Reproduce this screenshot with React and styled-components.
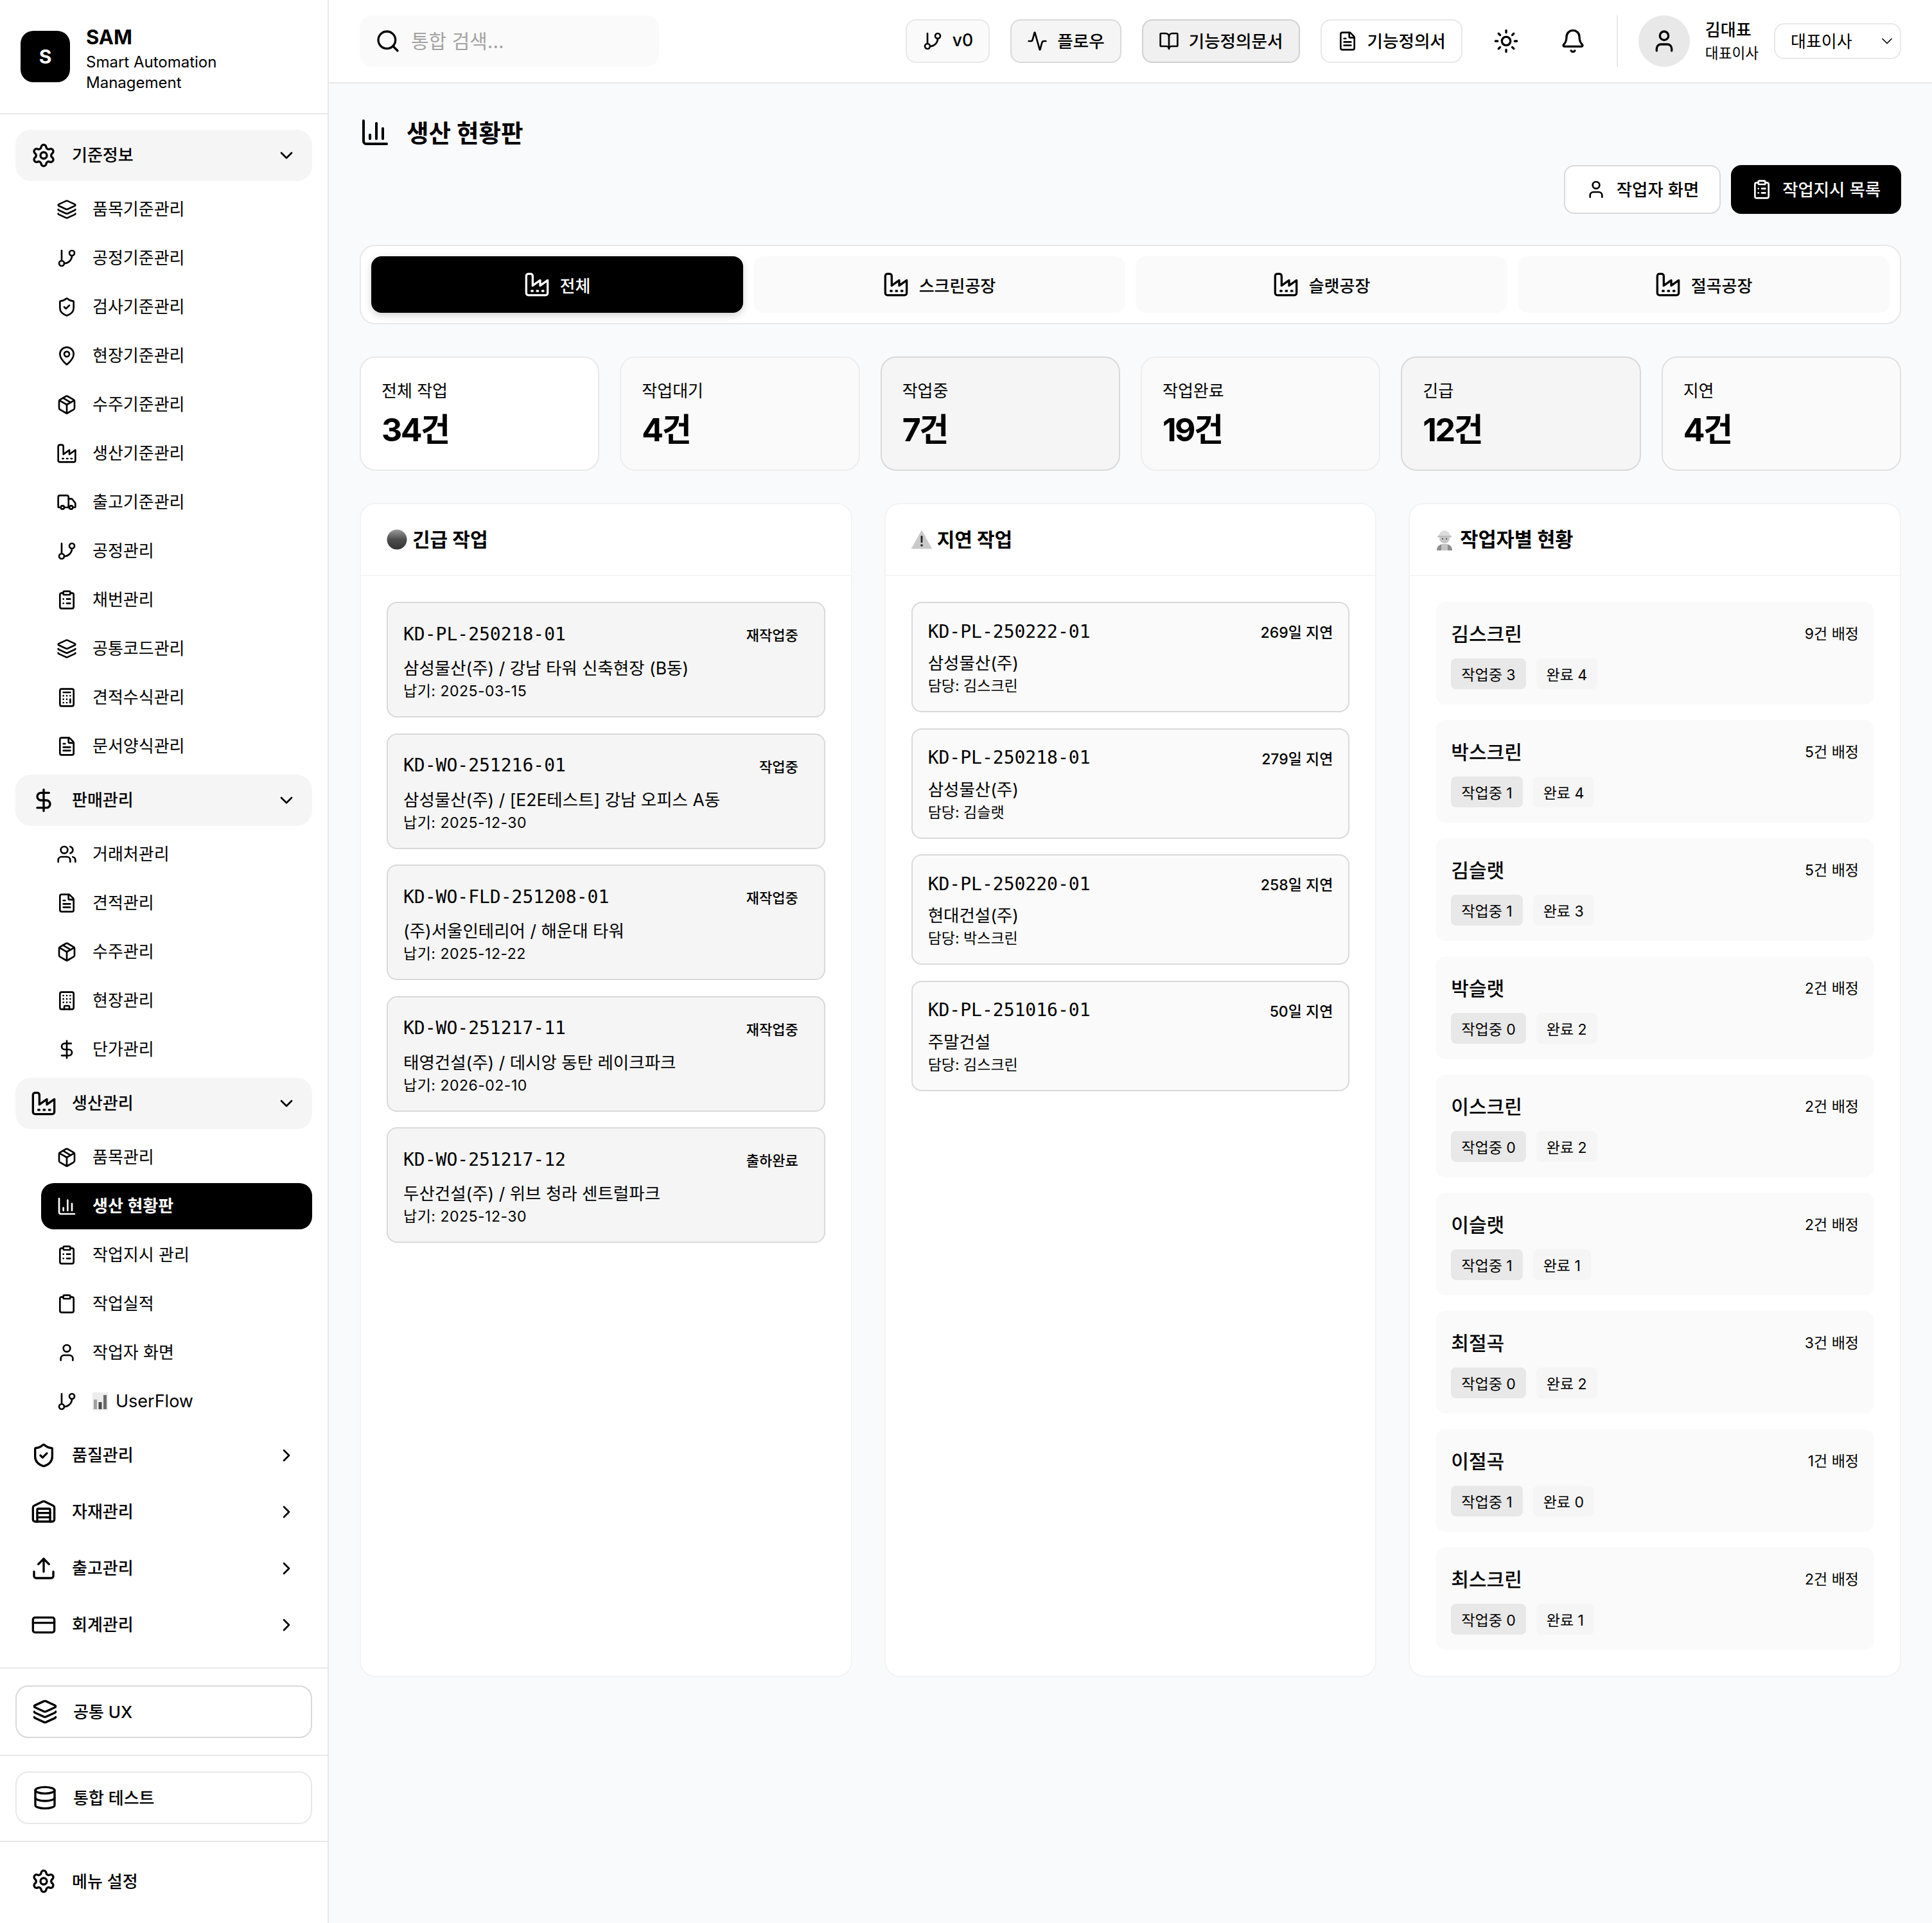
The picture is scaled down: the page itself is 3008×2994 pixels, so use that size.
import React from "react";
import styled, { createGlobalStyle } from "styled-components";
import {
  Activity, Bell, BookOpen, Building, Calculator, ChartColumn, ChevronDown, ChevronRight,
  Clipboard, ClipboardList, CreditCard, Database, DollarSign, FileText, GitBranch,
  Layers, MapPin, Package, Search, Settings, ShieldCheck, Sun, Truck, Upload, User, Users, Warehouse,
} from "lucide-react";

const GlobalStyle = createGlobalStyle`
  * { box-sizing: border-box; }
  body {
    margin: 0;
    background: #f9fafb;
    color: #000;
    font-family: Inter, "Noto Sans CJK KR", sans-serif;
  }
`;

const Layout = styled.div`
  display: flex;
  min-height: 2994px;
`;

/* hangul sits a little low in the flex rows, this lifts the text next to an icon */
const Label = styled.span`
  margin-bottom: ${(p) => p.$lift || 4}px;
`;

/* sidebar */
const Sidebar = styled.aside`
  width: 512px;
  flex-shrink: 0;
  display: flex;
  flex-direction: column;
  background: #fff;
  border-right: 2px solid #e8e8e8;
`;

const Brand = styled.div`
  height: 178px;
  display: flex;
  align-items: center;
  gap: 25px;
  padding: 0 32px;
  border-bottom: 2px solid #e8e8e8;
`;

const LogoBox = styled.div`
  width: 77px;
  height: 80px;
  display: flex;
  align-items: center;
  justify-content: center;
  background: #000;
  color: #fff;
  border-radius: 20px;
  font-size: 30px;
  font-weight: 700;
`;

const BrandText = styled.div`
  margin-top: 4px;
`;

const BrandName = styled.div`
  font-size: 31px;
  font-weight: 700;
  line-height: 46px;
`;

const BrandSub = styled.div`
  font-size: 24px;
  line-height: 32px;
`;

const Menu = styled.nav`
  flex: 1;
  display: flex;
  flex-direction: column;
  gap: 8px;
  padding: 24px;
`;

const GroupHead = styled.div`
  height: 80px;
  display: flex;
  align-items: center;
  gap: 24px;
  padding: 0 24px;
  border-radius: 24px;
  background: ${(p) => (p.$open ? "#f5f5f5" : "transparent")};
  font-size: 26px;
  font-weight: 500;
`;

const ChevronSlot = styled.span`
  display: flex;
  margin-left: auto;
`;

const SubList = styled.div`
  display: flex;
  flex-direction: column;
  gap: 4px;
  padding-left: 40px;
`;

const SubItem = styled.div`
  height: 72px;
  display: flex;
  align-items: center;
  gap: 24px;
  padding: 0 24px;
  border-radius: 20px;
  font-size: 26px;
  font-weight: ${(p) => (p.$active ? 600 : 400)};
  background: ${(p) => (p.$active ? "#000" : "transparent")};
  color: ${(p) => (p.$active ? "#fff" : "#000")};
`;

const FlowName = styled.span`
  margin: 0 0 2px -12px;
  font-size: 27px;
`;

const SideSection = styled.div`
  padding: 26px 24px;
  border-top: 2px solid #e8e8e8;
`;

const TestSection = styled(SideSection)`
  padding: 24px 24px 26px;
`;

const SideFooter = styled(SideSection)`
  padding: 21px 24px 25px;
`;

const SideBox = styled.div`
  height: 82px;
  display: flex;
  align-items: center;
  gap: 24px;
  padding: 0 24px;
  border: 2px solid ${(p) => p.$line};
  border-radius: 20px;
  background: #fff;
  font-size: 26px;
  font-weight: 500;
`;

/* top bar */
const Body = styled.div`
  flex: 1;
  min-width: 0;
`;

const TopBar = styled.header`
  height: 130px;
  display: flex;
  align-items: center;
  justify-content: space-between;
  padding: 0 48px;
  background: #fff;
  border-bottom: 2px solid #e8e8e8;
`;

const SearchBox = styled.div`
  width: 466px;
  height: 80px;
  display: flex;
  align-items: center;
  gap: 16px;
  padding: 0 24px;
  border-radius: 20px;
  background: #fafafa;
  color: #a3a3a3;
  font-size: 30px;
  svg { color: #000; }
`;

const TopRight = styled.div`
  display: flex;
  align-items: center;
  gap: 32px;
`;

const TopButton = styled.div`
  height: 68px;
  display: flex;
  align-items: center;
  gap: 15px;
  padding: 0 24px;
  border: 2px solid ${(p) => p.$line};
  border-radius: 16px;
  background: ${(p) => p.$bg};
  font-size: 26.6px;
  font-weight: 500;
`;

const IconButton = styled.div`
  width: 72px;
  height: 72px;
  display: flex;
  align-items: center;
  justify-content: center;
`;

const Divider = styled.div`
  width: 2px;
  height: 80px;
  background: #e8e8e8;
`;

const Profile = styled.div`
  display: flex;
  align-items: center;
  gap: 24px;
`;

const Avatar = styled.div`
  width: 80px;
  height: 80px;
  display: flex;
  align-items: center;
  justify-content: center;
  border-radius: 50%;
  background: #e8e8e8;
`;

const ProfileName = styled.div`
  font-size: 26px;
  font-weight: 500;
  line-height: 38px;
`;

const ProfileRole = styled.div`
  font-size: 22.6px;
  line-height: 34px;
`;

const RoleSelect = styled.div`
  width: 198px;
  height: 56px;
  display: flex;
  align-items: center;
  justify-content: space-between;
  padding: 0 6px 0 24px;
  border: 2px solid #e8e8e8;
  border-radius: 16px;
  background: #fff;
  font-size: 26px;
`;

/* page */
const Page = styled.main`
  padding: 48px;
`;

const TitleRow = styled.div`
  height: 56px;
  display: flex;
  align-items: center;
  gap: 25px;
  font-size: 37.5px;
  font-weight: 700;
`;

const Actions = styled.div`
  display: flex;
  justify-content: flex-end;
  gap: 16px;
  margin: 23px 0 48px;
`;

const ActionButton = styled.div`
  height: 76px;
  display: flex;
  align-items: center;
  gap: 16px;
  padding: 0 ${(p) => (p.$primary ? 30 : 32)}px;
  border-radius: 16px;
  border: 2px solid ${(p) => (p.$primary ? "#000" : "#d9d9d9")};
  background: ${(p) => (p.$primary ? "#000" : "#fff")};
  color: ${(p) => (p.$primary ? "#fff" : "#000")};
  font-size: 26.4px;
  font-weight: 500;
`;

const TabBar = styled.div`
  display: grid;
  grid-template-columns: repeat(4, 1fr);
  gap: 16px;
  padding: 16px;
  border: 2px solid #e8e8e8;
  border-radius: 24px;
  background: #fff;
`;

const Tab = styled.div`
  height: 88px;
  display: flex;
  align-items: center;
  justify-content: center;
  gap: 16px;
  border-radius: 16px;
  background: ${(p) => (p.$active ? "#000" : "#fafafa")};
  color: ${(p) => (p.$active ? "#fff" : "#000")};
  box-shadow: ${(p) => (p.$active ? "0 4px 12px rgba(0,0,0,.18)" : "none")};
  font-size: 26px;
  font-weight: 500;
`;

const StatGrid = styled.div`
  display: grid;
  grid-template-columns: repeat(6, 1fr);
  gap: 32px;
  margin: 50px 0;
`;

const StatCard = styled.div`
  height: 178px;
  padding: 32px;
  border: 2px solid ${(p) => p.$line};
  border-radius: 24px;
  background: ${(p) => p.$bg};
`;

const StatLabel = styled.div`
  font-size: 26px;
  line-height: 40px;
`;

const StatValue = styled.div`
  margin-top: 10px;
  font-size: 50px;
  font-weight: 700;
  letter-spacing: -2.5px;
  line-height: 60px;
`;

const PanelGrid = styled.div`
  display: grid;
  grid-template-columns: repeat(3, 1fr);
  gap: 50px;
`;

const Panel = styled.section`
  border: 2px solid #f3f3f3;
  border-radius: 24px;
  background: #fff;
`;

const PanelHead = styled.div`
  height: 112px;
  display: flex;
  align-items: center;
  gap: 8px;
  padding: 0 40px;
  border-bottom: 2px solid #f5f5f5;
  font-size: 30px;
  font-weight: 700;
`;

const WorkerTitle = styled(Label)`
  margin-left: 2px;
  font-size: 30.6px;
`;

const PanelBody = styled.div`
  display: flex;
  flex-direction: column;
  gap: ${(p) => p.$gap}px;
  padding: 40px;
`;

const JobCard = styled.div`
  padding: 23px 24px;
  border: 2px solid #d9d9d9;
  border-radius: 16px;
  background: ${(p) => p.$bg};
`;

const JobTop = styled.div`
  display: flex;
  align-items: center;
  justify-content: space-between;
  min-height: ${(p) => p.$tall}px;
`;

const JobId = styled.div`
  font-family: "DejaVu Sans Mono", monospace;
  font-size: 28px;
`;

const Badge = styled.div`
  padding: 8px 16px;
  border-radius: 12px;
  background: #f5f5f5;
  font-size: 22px;
  font-weight: 500;
`;

const Delay = styled.div`
  font-size: 23px;
  font-weight: 500;
`;

const JobName = styled.div`
  margin-top: 8px;
  font-size: 26.5px;
  line-height: 40px;
`;

const JobMeta = styled.div`
  font-size: 23px;
  line-height: 32px;
`;

const JobDate = styled(JobMeta)`
  letter-spacing: 0.5px;
`;

const WorkerCard = styled.div`
  height: 160px;
  padding: 24px;
  border-radius: 16px;
  background: #fafafa;
`;

const WorkerTop = styled.div`
  display: flex;
  align-items: center;
  justify-content: space-between;
  height: 48px;
  font-size: 23px;
`;

const WorkerName = styled.div`
  font-size: 30px;
  font-weight: 500;
`;

const ChipRow = styled.div`
  display: flex;
  gap: 16px;
  margin-top: 16px;
`;

const Chip = styled.div`
  height: 48px;
  display: flex;
  align-items: center;
  padding: 0 16px;
  border-radius: 8px;
  background: ${(p) => (p.$busy ? "#e8e8e8" : "#f5f5f5")};
  font-size: 23px;
`;

const InlineEmoji = styled.svg`
  flex-shrink: 0;
`;

/* the factory of the reference has the tall left column, lucide's current one is squatter */
const Factory = ({ size = 24 }) => (
  <svg width={size} height={size} viewBox="0 0 24 24" fill="none" stroke="currentColor" strokeWidth="2" strokeLinecap="round" strokeLinejoin="round">
    <path d="M2 20a2 2 0 0 0 2 2h16a2 2 0 0 0 2-2V8l-7 5V8l-7 5V4a2 2 0 0 0-2-2H4a2 2 0 0 0-2 2Z" />
    <path d="M17 18h1" />
    <path d="M12 18h1" />
    <path d="M7 18h1" />
  </svg>
);

const Sphere = () => (
  <InlineEmoji width="32" height="32" viewBox="0 0 32 32">
    <defs>
      <linearGradient id="sphere" x1="0" y1="0" x2="0" y2="1">
        <stop offset="0" stopColor="#9a9a9a" />
        <stop offset=".5" stopColor="#4d4d4d" />
        <stop offset="1" stopColor="#333" />
      </linearGradient>
    </defs>
    <circle cx="16" cy="16" r="15.5" fill="url(#sphere)" />
  </InlineEmoji>
);

const Warning = () => (
  <InlineEmoji width="32" height="30" viewBox="0 0 32 30">
    <path d="M16 1 31.5 29H.5Z" fill="#c9c9c9" stroke="#c9c9c9" strokeLinejoin="round" />
    <rect x="14.6" y="9" width="2.8" height="11" rx="1.2" fill="#222" />
    <circle cx="16" cy="24" r="1.8" fill="#222" />
  </InlineEmoji>
);

const Worker = () => (
  <InlineEmoji width="28" height="34" viewBox="0 0 28 34">
    <path d="M2 34c0-7 5-10 12-10s12 3 12 10Z" fill="#8d8d8d" />
    <rect x="9" y="24" width="10" height="10" fill="#c4c4c4" />
    <circle cx="14" cy="15" r="8" fill="#c6c6c6" />
    <circle cx="11" cy="16" r="1" fill="#333" />
    <circle cx="17" cy="16" r="1" fill="#333" />
    <path d="M5 12a9 9 0 0 1 18 0Z" fill="#dcdcdc" />
    <rect x="3" y="11" width="22" height="2.4" rx="1" fill="#bdbdbd" />
  </InlineEmoji>
);

const BarsEmoji = () => (
  <InlineEmoji width="24" height="28" viewBox="0 0 24 28">
    <rect width="24" height="28" fill="#ececec" />
    <rect x="2" y="11" width="5" height="15" fill="#a0a0a0" />
    <rect x="9.5" y="15" width="5" height="11" fill="#4a4a4a" />
    <rect x="17" y="4" width="5" height="22" fill="#6a6a6a" />
  </InlineEmoji>
);

const groups = [
  {
    label: "기준정보", Icon: Settings, items: [
      ["품목기준관리", Layers], ["공정기준관리", GitBranch], ["검사기준관리", ShieldCheck],
      ["현장기준관리", MapPin], ["수주기준관리", Package], ["생산기준관리", Factory],
      ["출고기준관리", Truck], ["공정관리", GitBranch], ["채번관리", ClipboardList],
      ["공통코드관리", Layers], ["견적수식관리", Calculator], ["문서양식관리", FileText],
    ],
  },
  {
    label: "판매관리", Icon: DollarSign, items: [
      ["거래처관리", Users], ["견적관리", FileText], ["수주관리", Package],
      ["현장관리", Building], ["단가관리", DollarSign],
    ],
  },
  {
    label: "생산관리", Icon: Factory, items: [
      ["품목관리", Package], ["생산 현황판", ChartColumn, true], ["작업지시 관리", ClipboardList],
      ["작업실적", Clipboard], ["작업자 화면", User], ["UserFlow", GitBranch, false, true],
    ],
  },
  { label: "품질관리", Icon: ShieldCheck },
  { label: "자재관리", Icon: Warehouse },
  { label: "출고관리", Icon: Upload },
  { label: "회계관리", Icon: CreditCard },
];

const stats = [
  ["전체 작업", "34건", "#fff", "#e8e8e8"],
  ["작업대기", "4건", "#fafafa", "#eeeeee"],
  ["작업중", "7건", "#f5f5f5", "#d9d9d9"],
  ["작업완료", "19건", "#fafafa", "#eeeeee"],
  ["긴급", "12건", "#f5f5f5", "#d9d9d9"],
  ["지연", "4건", "#fafafa", "#e0e0e0"],
];

const urgent = [
  ["KD-PL-250218-01", "재작업중", "삼성물산(주) / 강남 타워 신축현장 (B동)", "납기: 2025-03-15"],
  ["KD-WO-251216-01", "작업중", "삼성물산(주) / [E2E테스트] 강남 오피스 A동", "납기: 2025-12-30"],
  ["KD-WO-FLD-251208-01", "재작업중", "(주)서울인테리어 / 해운대 타워", "납기: 2025-12-22"],
  ["KD-WO-251217-11", "재작업중", "태영건설(주) / 데시앙 동탄 레이크파크", "납기: 2026-02-10"],
  ["KD-WO-251217-12", "출하완료", "두산건설(주) / 위브 청라 센트럴파크", "납기: 2025-12-30"],
];

const delayed = [
  ["KD-PL-250222-01", "269일 지연", "삼성물산(주)", "담당: 김스크린"],
  ["KD-PL-250218-01", "279일 지연", "삼성물산(주)", "담당: 김슬랫"],
  ["KD-PL-250220-01", "258일 지연", "현대건설(주)", "담당: 박스크린"],
  ["KD-PL-251016-01", "50일 지연", "주말건설", "담당: 김스크린"],
];

const workers = [
  ["김스크린", 9, 3, 4], ["박스크린", 5, 1, 4], ["김슬랫", 5, 1, 3],
  ["박슬랫", 2, 0, 2], ["이스크린", 2, 0, 2], ["이슬랫", 2, 1, 1],
  ["최절곡", 3, 0, 2], ["이절곡", 1, 1, 0], ["최스크린", 2, 0, 1],
];

export default function App() {
  return (
    <Layout>
      <GlobalStyle />
      <Sidebar>
        <Brand>
          <LogoBox>S</LogoBox>
          <BrandText>
            <BrandName>SAM</BrandName>
            <BrandSub>Smart Automation<br />Management</BrandSub>
          </BrandText>
        </Brand>
        <Menu>
          {groups.map(({ label, Icon, items }) => (
            <React.Fragment key={label}>
              <GroupHead $open={!!items}>
                <Icon size={40} />
                <Label $lift={5}>{label}</Label>
                <ChevronSlot>
                  {items ? <ChevronDown size={32} /> : <ChevronRight size={32} />}
                </ChevronSlot>
              </GroupHead>
              {items && (
                <SubList>
                  {items.map(([name, ItemIcon, active, emoji]) => (
                    <SubItem key={name} $active={active}>
                      <ItemIcon size={32} />
                      {emoji && <BarsEmoji />}
                      {emoji ? <FlowName>{name}</FlowName> : <Label $lift={5}>{name}</Label>}
                    </SubItem>
                  ))}
                </SubList>
              )}
            </React.Fragment>
          ))}
        </Menu>
        <SideSection>
          <SideBox $line="#d9d9d9"><Layers size={40} /><Label>공통 UX</Label></SideBox>
        </SideSection>
        <TestSection>
          <SideBox $line="#e8e8e8"><Database size={40} /><Label>통합 테스트</Label></SideBox>
        </TestSection>
        <SideFooter>
          <GroupHead><Settings size={40} /><Label>메뉴 설정</Label></GroupHead>
        </SideFooter>
      </Sidebar>

      <Body>
        <TopBar>
          <SearchBox><Search size={40} /><Label>통합 검색...</Label></SearchBox>
          <TopRight>
            <TopButton $bg="#fafafa" $line="#e8e8e8"><GitBranch size={32} /><Label>v0</Label></TopButton>
            <TopButton $bg="#f5f5f5" $line="#d9d9d9"><Activity size={32} /><Label>플로우</Label></TopButton>
            <TopButton $bg="#f0f0f0" $line="#d0d0d0"><BookOpen size={32} /><Label>기능정의문서</Label></TopButton>
            <TopButton $bg="#fff" $line="#e8e8e8"><FileText size={32} /><Label>기능정의서</Label></TopButton>
            <IconButton><Sun size={40} /></IconButton>
            <IconButton><Bell size={40} /></IconButton>
            <Divider />
            <Profile>
              <Avatar><User size={40} /></Avatar>
              <div>
                <ProfileName>김대표</ProfileName>
                <ProfileRole>대표이사</ProfileRole>
              </div>
              <RoleSelect><Label>대표이사</Label><ChevronDown size={28} strokeWidth={1.5} /></RoleSelect>
            </Profile>
          </TopRight>
        </TopBar>

        <Page>
          <TitleRow><ChartColumn size={48} /><Label>생산 현황판</Label></TitleRow>
          <Actions>
            <ActionButton><User size={32} /><Label>작업자 화면</Label></ActionButton>
            <ActionButton $primary><ClipboardList size={32} /><Label>작업지시 목록</Label></ActionButton>
          </Actions>

          <TabBar>
            {["전체", "스크린공장", "슬랫공장", "절곡공장"].map((name, i) => (
              <Tab key={name} $active={i === 0}><Factory size={40} />{name}</Tab>
            ))}
          </TabBar>

          <StatGrid>
            {stats.map(([label, value, bg, line]) => (
              <StatCard key={label} $bg={bg} $line={line}>
                <StatLabel>{label}</StatLabel>
                <StatValue>{value}</StatValue>
              </StatCard>
            ))}
          </StatGrid>

          <PanelGrid>
            <Panel>
              <PanelHead><Sphere /><Label>긴급 작업</Label></PanelHead>
              <PanelBody $gap={24.5}>
                {urgent.map(([id, badge, name, meta]) => (
                  <JobCard key={id} $bg="#f5f5f5">
                    <JobTop $tall={50}>
                      <JobId>{id}</JobId>
                      <Badge>{badge}</Badge>
                    </JobTop>
                    <JobName>{name}</JobName>
                    <JobDate>{meta}</JobDate>
                  </JobCard>
                ))}
              </PanelBody>
            </Panel>

            <Panel>
              <PanelHead><Warning /><Label>지연 작업</Label></PanelHead>
              <PanelBody $gap={24.5}>
                {delayed.map(([id, delay, name, meta]) => (
                  <JobCard key={id} $bg="#fafafa">
                    <JobTop $tall={42}>
                      <JobId>{id}</JobId>
                      <Delay>{delay}</Delay>
                    </JobTop>
                    <JobName>{name}</JobName>
                    <JobMeta>{meta}</JobMeta>
                  </JobCard>
                ))}
              </PanelBody>
            </Panel>

            <Panel>
              <PanelHead><Worker /><WorkerTitle>작업자별 현황</WorkerTitle></PanelHead>
              <PanelBody $gap={24}>
                {workers.map(([name, total, busy, done]) => (
                  <WorkerCard key={name}>
                    <WorkerTop>
                      <WorkerName>{name}</WorkerName>
                      {total}건 배정
                    </WorkerTop>
                    <ChipRow>
                      <Chip $busy>작업중 {busy}</Chip>
                      <Chip>완료 {done}</Chip>
                    </ChipRow>
                  </WorkerCard>
                ))}
              </PanelBody>
            </Panel>
          </PanelGrid>
        </Page>
      </Body>
    </Layout>
  );
}
